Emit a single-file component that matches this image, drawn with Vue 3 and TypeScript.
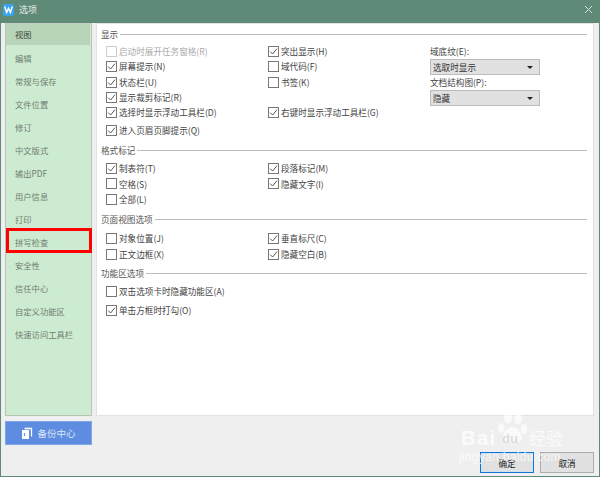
<script setup lang="ts">
interface Check { label: string; on?: boolean; off?: boolean }
const nav: string[] = ['视图','编辑','常规与保存','文件位置','修订','中文版式','输出PDF','用户信息','打印','拼写检查','安全性','信任中心','自定义功能区','快速访问工具栏']
const sections: { key: string; title: string; col1: (Check)[]; col2: (Check | null)[] }[] = [
  { key: 'display', title: '显示',
    col1: [{label:'启动时展开任务窗格(R)',off:true},{label:'屏幕提示(N)',on:true},{label:'状态栏(U)',on:true},{label:'显示裁剪标记(R)',on:true},{label:'选择时显示浮动工具栏(D)',on:true},{label:'进入页眉页脚提示(Q)',on:true}],
    col2: [{label:'突出显示(H)',on:true},{label:'域代码(F)'},{label:'书签(K)'},null,{label:'右键时显示浮动工具栏(G)',on:true},null] },
  { key: 'format', title: '格式标记',
    col1: [{label:'制表符(T)',on:true},{label:'空格(S)'},{label:'全部(L)'}],
    col2: [{label:'段落标记(M)',on:true},{label:'隐藏文字(I)',on:true},null] },
  { key: 'page', title: '页面视图选项',
    col1: [{label:'对象位置(J)'},{label:'正文边框(X)'}],
    col2: [{label:'垂直标尺(C)',on:true},{label:'隐藏空白(B)',on:true}] },
  { key: 'ribbon', title: '功能区选项',
    col1: [{label:'双击选项卡时隐藏功能区(A)'},{label:'单击方框时打勾(O)',on:true}],
    col2: [null,null] },
]
</script>

<template>
  <div class="win">
    <header class="title">
      <div class="logo">
        <svg width="11" height="11" viewBox="0 0 13 13"><path d="M2 3 L4.3 10 L6.5 5 L8.7 10 L11 3" fill="none" stroke="#fff" stroke-width="1.7"/></svg>
      </div>
      <span class="title-text">选项</span>
      <svg class="close" width="9" height="9" viewBox="0 0 9 9"><path d="M1 1 L8 8 M8 1 L1 8" stroke="#d5e2dc" stroke-width="1"/></svg>
    </header>
    <div class="body">
      <div class="main">
        <div class="left">
          <nav class="nav">
            <div v-for="(n, i) in nav" :key="n" class="nav-item" :class="{ sel: i === 0, mark: n === '拼写检查' }">{{ n }}</div>
          </nav>
          <div class="backup">
            <svg width="12" height="12" viewBox="0 0 12 12"><path d="M1 3 H8 V12 H1 Z" fill="#fff"/><path d="M3.5 1.5 H10.5 V9.5" fill="none" stroke="#fff" stroke-width="1.3"/><path d="M3.5 6 V9" stroke="#6a90dc" stroke-width="1.2"/></svg>
            <span>备份中心</span>
          </div>
        </div>
        <section class="panel">
          <div v-for="s in sections" :key="s.key" class="sec" :class="s.key">
            <div class="sec-head"><span>{{ s.title }}</span><i></i></div>
            <div class="sec-body">
              <div class="grid">
                <template v-for="(c, i) in s.col1" :key="i">
                  <label class="chk c1" :class="{ off: c.off }">
                    <span class="box"><svg v-if="c.on" width="9" height="9" viewBox="0 0 9 9"><path d="M1.2 4.6 L3.6 7 L8 1.6" fill="none" stroke="#555" stroke-width="1"/></svg></span>
                    <span>{{ c.label }}</span>
                  </label>
                  <label v-if="s.col2[i]" class="chk c2">
                    <span class="box"><svg v-if="s.col2[i]!.on" width="9" height="9" viewBox="0 0 9 9"><path d="M1.2 4.6 L3.6 7 L8 1.6" fill="none" stroke="#555" stroke-width="1"/></svg></span>
                    <span>{{ s.col2[i]!.label }}</span>
                  </label>
                  <span v-else class="c2"></span>
                </template>
              </div>
              <div v-if="s.key === 'display'" class="selects">
                <div class="sel-label">域底纹(E):</div>
                <div class="select"><span>选取时显示</span><b></b></div>
                <div class="sel-label">文档结构图(P):</div>
                <div class="select"><span>隐藏</span><b></b></div>
              </div>
            </div>
          </div>
        </section>
      </div>
      <footer class="foot">
        <button class="btn ok">确定</button>
        <button class="btn">取消</button>
      </footer>
    </div>
    <div class="mark-wm" aria-hidden="true">
      <svg class="paw" width="34" height="34" viewBox="0 0 34 34" fill="#fff" opacity=".7">
        <ellipse cx="6" cy="16" rx="3.5" ry="5"/><ellipse cx="13" cy="6" rx="4" ry="5.5"/><ellipse cx="23" cy="7" rx="4" ry="5.5"/><ellipse cx="29" cy="17" rx="3.5" ry="5"/>
        <path d="M17 15 C11 15 6 24 8 28 C11 32 23 32 27 28 C29 24 23 15 17 15 Z"/>
      </svg>
      <div class="wm-a">Bai<span class="wm-du">du</span><span class="wm-cn">经验</span></div>
      <div class="wm-b">jingyan.baidu.com</div>
    </div>
  </div>
</template>

<style>
html, body { margin: 0; padding: 0; }
</style>

<style scoped>
.win {
  width: 600px; height: 477px; box-sizing: border-box; position: relative; overflow: hidden;
  background: #efefef; border: 1px solid #5f8a77; border-top: 0;
  font-family: "Noto Sans CJK SC", "Liberation Sans", sans-serif; font-size: 8.6px; color: #444;
  display: flex; flex-direction: column;
}
.title { height: 23px; box-sizing: border-box; flex: none; background: #5f8a77; display: flex; align-items: center; padding: 0 7px 4px 2px; margin: 0 -1px; }
.logo { width: 11px; height: 12px; border-radius: 2px; background: #3aa3ee; display: flex; align-items: center; justify-content: center; margin-right: 5px; margin-left: 1px; overflow: hidden; }
.title-text { color: #e4ece8; font-size: 9px; flex: 1; }
.close { margin-right: 0; }
.body { flex: 1; display: flex; flex-direction: column; padding: 0 5px 0 4px; }
.main { height: 393px; display: flex; gap: 4px; flex: none; }
.left { width: 87px; flex: none; position: relative; }
.nav { height: 393px; box-sizing: border-box; background: #cdebd0; border: 1px solid #b8c4b8; border-top: 1px solid #c4cfc4; color: #6f7d70; font-size: 8.3px; }
.nav-item { height: 23px; line-height: 23px; padding-left: 9px; position: relative; box-sizing: border-box; }
.nav-item.sel { height: 21px; line-height: 21px; margin: 0 1px 2px 0; background: #b8d4b9; color: #3c4a3e; }
.nav-item.mark::after { content: ""; position: absolute; left: 0; right: -1px; top: -3px; height: 25px; border: 3px solid #f00; box-sizing: border-box; }
.backup { height: 24px; margin-top: 5px; background: #5e8ce0; border: 1px solid #7fa6e8; box-sizing: border-box; color: #dbe5f8; display: flex; align-items: center; justify-content: center; gap: 4px; font-size: 9.5px; }
.panel { width: 498px; flex: none; box-sizing: border-box; background: #fff; border: 1px solid #e2e2e2; padding: 0 6px 0 4px; }
.sec-head { display: flex; align-items: center; gap: 2px; height: 14px; color: #555; }
.sec-head i { flex: 1; height: 1px; background: #bdbdbd; }
.display .sec-head { margin-top: 3px; }
.sec-body { display: flex; position: relative; }
.grid { display: grid; grid-template-columns: 162px 1fr; flex: 1; padding-left: 5px; align-items: center; }
.display .grid { margin-top: 3px; grid-template-rows: 14px 16px 16px 14px 16px 20px; }
.format { margin-top: 3px; }
.format .grid { margin-top: 3px; grid-template-rows: 16px 15px 16px; }
.page { margin-top: 5px; }
.page .grid { margin-top: 4px; grid-template-rows: 16px 16px; }
.ribbon { margin-top: 4px; }
.ribbon .grid { margin-top: 3px; grid-template-rows: 16px 22px; }
.chk { display: flex; align-items: center; gap: 2px; white-space: nowrap; color: #444; }
.chk.off { color: #aaa; }
.box { width: 9px; height: 9px; border: 1px solid #777; display: inline-flex; background: #fff; flex: none; }
.off .box { border-color: #ccc; }
.selects { width: 117px; position: absolute; left: 329px; top: 3px; }
.sel-label { height: 15px; line-height: 15px; color: #444; }
.select { width: 110px; height: 16px; box-sizing: border-box; border: 1px solid #bbb; background: #e1e1e1; display: flex; align-items: center; justify-content: space-between; padding: 0 6px 0 2px; color: #333; }
.select b { width: 0; height: 0; border-left: 3px solid transparent; border-right: 3px solid transparent; border-top: 3px solid #222; }
.foot { display: flex; justify-content: flex-end; gap: 6px; padding-top: 36px; }
.btn { width: 54px; height: 21px; box-sizing: border-box; background: #e1e1e1; border: 1px solid #adadad; font: inherit; color: #222; padding: 0; }
.btn.ok { border: 1px solid #0f78d7; box-shadow: inset 0 0 0 1px #cfe0f0; }
.mark-wm { position: absolute; left: 458px; top: 412px; width: 112px; height: 60px; pointer-events: none; color: rgba(255,255,255,.75); }
.paw { position: absolute; left: 36px; top: 0; }
.wm-a { position: absolute; left: 2px; top: 15px; width: 110px; height: 22px; font: bold 20px/22px "Liberation Sans", sans-serif; letter-spacing: 1.5px; white-space: nowrap; }
.wm-du { position: absolute; left: 41px; top: 4px; font-size: 13px; line-height: 16px; letter-spacing: 0; color: #dcdcdc; }
.wm-cn { position: absolute; left: 68px; top: 0; font: 17px/22px "Noto Sans CJK SC", sans-serif; letter-spacing: 0; }
.wm-b { position: absolute; left: 0; top: 38px; font: 12px "Liberation Sans", sans-serif; white-space: nowrap; letter-spacing: .3px; }
</style>
